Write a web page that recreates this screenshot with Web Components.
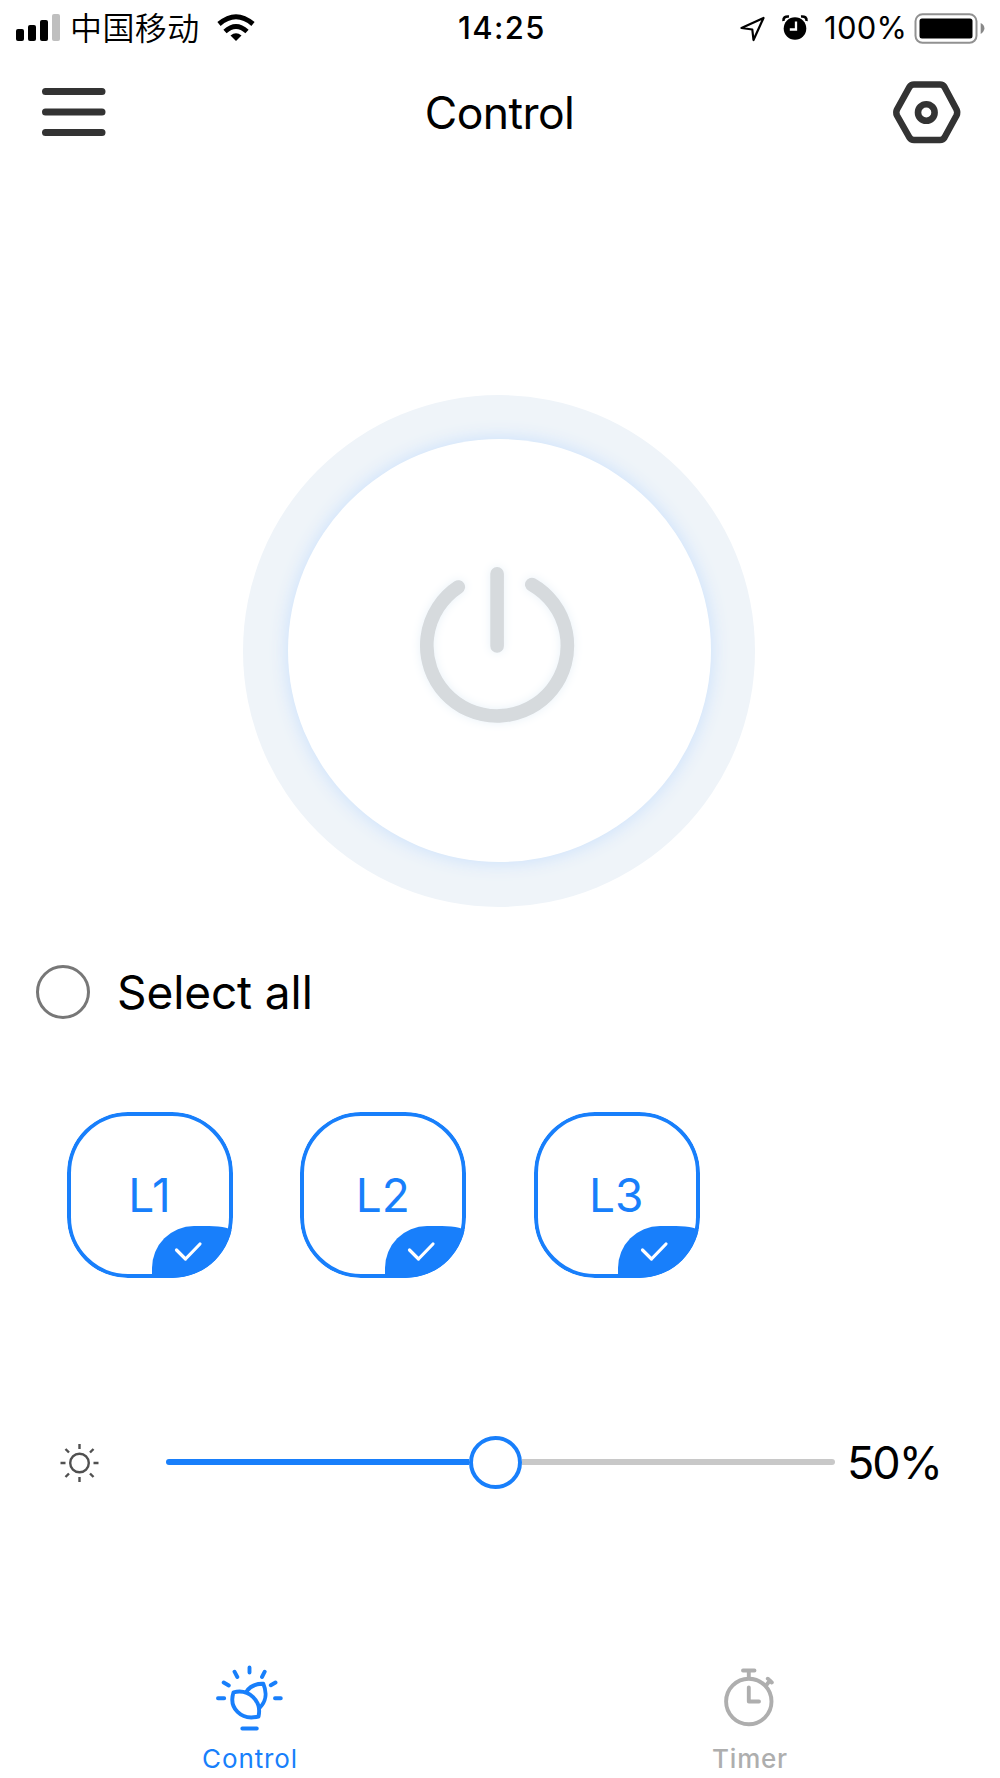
<!DOCTYPE html>
<html lang="en">
<head>
<meta charset="utf-8">
<title>Control</title>
<style>
html,body{margin:0;background:#fff}
body{width:1000px;height:1778px;overflow:hidden;font-family:Inter,"Liberation Sans","Noto Sans CJK SC",sans-serif;color:#000}
</style>
</head>
<body>
<light-app></light-app>
<script>
const define = (name, html) => customElements.define(name, class extends HTMLElement {
  constructor() {
    super();
    this.attachShadow({ mode: 'open' }).innerHTML =
      '<style>*{box-sizing:border-box}svg{display:block;flex:none;overflow:visible}span{white-space:nowrap}</style>' +
      (typeof html === 'function' ? html(this) : html);
  }
});

define('status-bar', `
<style>
:host{display:grid;grid-template-columns:1fr auto 1fr;height:54px;padding:0 16px 0 16px;align-items:center}
.side{display:flex;align-items:center;height:54px}
.right{justify-content:flex-end}
.carrier{font:350 32px/52px "Noto Sans CJK SC",sans-serif;margin:0 0 4px 7px;width:147px;letter-spacing:.4px}
.time{font-size:31px;font-weight:550;line-height:54px;letter-spacing:1.400px;padding:1px 0 0 4px}
.pct{font-size:31px;font-weight:380;line-height:54px;width:90px;letter-spacing:.3px;padding-top:1px}
</style>
<div class="side">
  <svg width="47" height="54"><g><rect y="28" width="8" height="12" rx="2"/><rect x="12" y="24" width="8" height="16" rx="2"/><rect x="24" y="19" width="8" height="21" rx="2"/><rect x="36" y="13" width="8" height="27" rx="2" fill="#bfbfbf"/></g></svg>
  <span class="carrier">中国移动</span>
  <svg width="38" height="54"><g fill="none" stroke="#000"><path d="M2 23Q19 8.500 36 23" stroke-width="5"/><path d="M8 30.500Q19 20.500 30 30.500" stroke-width="4.800"/></g><path d="M13.500 34.500Q19 30 24.500 34.500L19 40Z"/></svg>
</div>
<span class="time">14:25</span>
<div class="side right">
  <svg width="26" height="54"><path d="M1.500 27L23.500 17L13.500 39L12.300 28.500Z" fill="none" stroke="#000" stroke-width="2.200" stroke-linejoin="round"/></svg>
  <svg width="26" height="54" style="margin:0 16px 0 16px"><circle cx="13" cy="27.500" r="11.300"/><path d="M1.500 20Q1 15 7 15.500M24.500 20Q25 15 19 15.500" fill="none" stroke="#000" stroke-width="2.600"/><path d="M14 20.500V28.500H7.800" fill="none" stroke="#fff" stroke-width="2.300"/></svg>
  <span class="pct">100%</span>
  <svg width="70" height="54"><rect x="1.500" y="13.300" width="61" height="28.500" rx="7" fill="none" stroke="#919191" stroke-width="2"/><rect x="5.500" y="17.500" width="53" height="20" rx="2.500"/><path d="M66.700 22Q70.400 24 70.400 27.300T66.700 33Z" fill="#888"/></svg>
</div>`);

define('nav-bar', `
<style>
:host{display:grid;grid-template-columns:1fr auto 1fr;align-items:center;height:116px;padding:0 39px 0 42px}
span{font-size:44.500px;font-weight:380;line-height:60px;padding:1px 4px 0 0;letter-spacing:-.6px}
svg:last-child{justify-self:end}
</style>
<svg width="64" height="62"><path d="M3.500 10.500H60M3.500 31H60M3.500 51.500H60" stroke="#333" stroke-width="7" stroke-linecap="round"/></svg>
<span><slot></slot></span>
<svg width="68" height="62" fill="none" stroke="#333"><path d="M21 3.500H47Q50 3.500 51.500 6L63.500 28.500Q65 31.500 63.500 34.500L51.500 56.500Q50 59 47 59H21Q18 59 16.500 56.500L4 34.500Q2.500 31.500 4 28.500L16.500 6Q18 3.500 21 3.500Z" stroke-width="6.500"/><circle cx="33.300" cy="31.500" r="8.300" stroke-width="6.600"/></svg>`);

define('power-dial', `
<style>
:host{display:flex;justify-content:center;padding:224.500px 2px 0 0;height:737px}
.ring{width:512px;height:512px;border-radius:50%;background:#eff4f9;display:flex;align-items:center;justify-content:center}
.face{width:423px;height:423px;border-radius:50%;background:#fff;box-shadow:0 0 18px 1px #cbe1fc;display:flex;align-items:center;justify-content:center}
</style>
<div class="ring"><div class="face">
<svg width="160" height="160" viewBox="418.700 570.500 160 160" style="filter:drop-shadow(0 0 5px #e8f1f8)"><path d="M458 586.500A70.300 70.300 0 1 0 531.500 584M496.800 573.300V645.500" fill="none" stroke="#d6dadd" stroke-width="13.600" stroke-linecap="round"/></svg>
</div></div>`);

define('select-all', `
<style>
:host{display:flex;align-items:center;height:60px;margin-top:55px;padding-left:36px;gap:27px}
i{width:54px;height:54px;border-radius:50%;border:3px solid #777}
span{font-size:46px;font-weight:380;line-height:60px;letter-spacing:-.1px}
</style><i></i><span><slot></slot></span>`);

define('channel-tile', `
<style>
:host{display:grid;width:166px;height:166px;border-radius:61px;overflow:hidden;grid-template:100%/100%}
:host>*{grid-area:1/1}
.frame{border:4px solid #187ffb;border-radius:61px;display:flex;align-items:center;justify-content:center;font-size:46px;font-weight:380;line-height:60px;color:#187ffb}
.frame span{padding-right:1px}
.badge{align-self:end;justify-self:end;width:81.500px;height:52px;background:#187ffb;border-radius:42px 24px 0 0/42px 6px 0 0}
</style>
<div class="frame"><span><slot></slot></span></div>
<div class="badge"><svg width="82" height="52"><path d="M24.500 24L33.500 33L48 18" fill="none" stroke="#fff" stroke-width="3.200" stroke-linecap="round" stroke-linejoin="round"/></svg></div>`);

define('channel-row', `
<style>:host{display:flex;gap:67.300px;padding-left:67px;margin-top:89.500px}</style><slot></slot>`);

define('brightness-slider', `
<style>
:host{display:flex;align-items:center;height:60px;margin-top:154.500px;padding-left:59px}
.track{display:flex;align-items:center;width:669px;margin:0 12.500px 0 64.500px}
.on,.off{height:5.600px;background:#187ffb;width:303.500px;border-radius:3px 0 0 3px}
.off{background:#c8c8c8;flex:1;width:auto;border-radius:0 3px 3px 0}
.thumb{width:53px;height:53px;border-radius:50%;border:4.200px solid #187ffb;background:#fff}
span{font-size:45px;font-weight:380;line-height:60px;letter-spacing:-2px;padding-top:1px}
</style>
<svg width="42" height="42" viewBox="-20.500 -22 42 42" fill="none" stroke="#505050" stroke-width="2.400"><circle r="9.300"/><path d="M0-19V-14M0 19V14M-19 0H-14M19 0H14M-14-14L-10.500-10.500M14-14L10.500-10.500M-14 14L-10.500 10.500M14 14L10.500 10.500"/></svg>
<div class="track"><div class="on"></div><div class="thumb"></div><div class="off"></div></div>
<span><slot></slot></span>`);

const icons = {
  bulb: '<path d="M249.500 1667.500V1672.500M234.500 1671.700L237.300 1677M264.700 1671.700L262 1677M223.700 1682.500L228.800 1685.500M275.500 1682.500L270.800 1685.300M218 1698.200H224.200M275 1698.200H280.800M242.300 1728.500H256.800"/><path d="M233.500 1692.300C249 1688.500 262 1701 258.500 1716.500C241 1721 228.500 1708 233.500 1692.300ZM246.500 1691.500C250 1686.500 256 1683.500 263.300 1683.800C267.500 1693.500 265.500 1702 259.800 1707.500"/>',
  timer: '<circle cx="748.800" cy="1701.500" r="22.700"/><path d="M743 1670.500H754.500M748.800 1671V1678M766 1685.500L770 1680.500M767.800 1678.700L771.800 1682.500M748.800 1687.500V1701.500H759"/>'
};
define('tab-item', el => {
  const timer = el.getAttribute('icon') === 'timer';
  return `
<style>
:host{flex:1;display:flex;flex-direction:column;align-items:center;color:${timer ? '#aeaeae' : '#187ffb'}}
span{font-size:26px;font-weight:${timer ? 500 : 430};line-height:36px;letter-spacing:${timer ? .8 : .9}px;margin-top:5px}
</style>
<svg width="80" height="74" viewBox="${timer ? 710 : 210} 1662 80 74" fill="none" stroke="currentColor" stroke-width="3.900" stroke-linecap="round" stroke-linejoin="round">${icons[el.getAttribute('icon')]}</svg>
<span><slot></slot></span>`;
});
define('tab-bar', `<style>:host{display:flex;height:116px;margin-top:auto}</style><slot></slot>`);

define('light-app', `
<style>:host{display:flex;flex-direction:column;width:1000px;height:1778px;background:#fff}</style>
<status-bar></status-bar>
<nav-bar>Control</nav-bar>
<power-dial></power-dial>
<select-all>Select all</select-all>
<channel-row><channel-tile>L1</channel-tile><channel-tile>L2</channel-tile><channel-tile>L3</channel-tile></channel-row>
<brightness-slider>50%</brightness-slider>
<tab-bar><tab-item icon="bulb">Control</tab-item><tab-item icon="timer">Timer</tab-item></tab-bar>`);
</script>
</body>
</html>
